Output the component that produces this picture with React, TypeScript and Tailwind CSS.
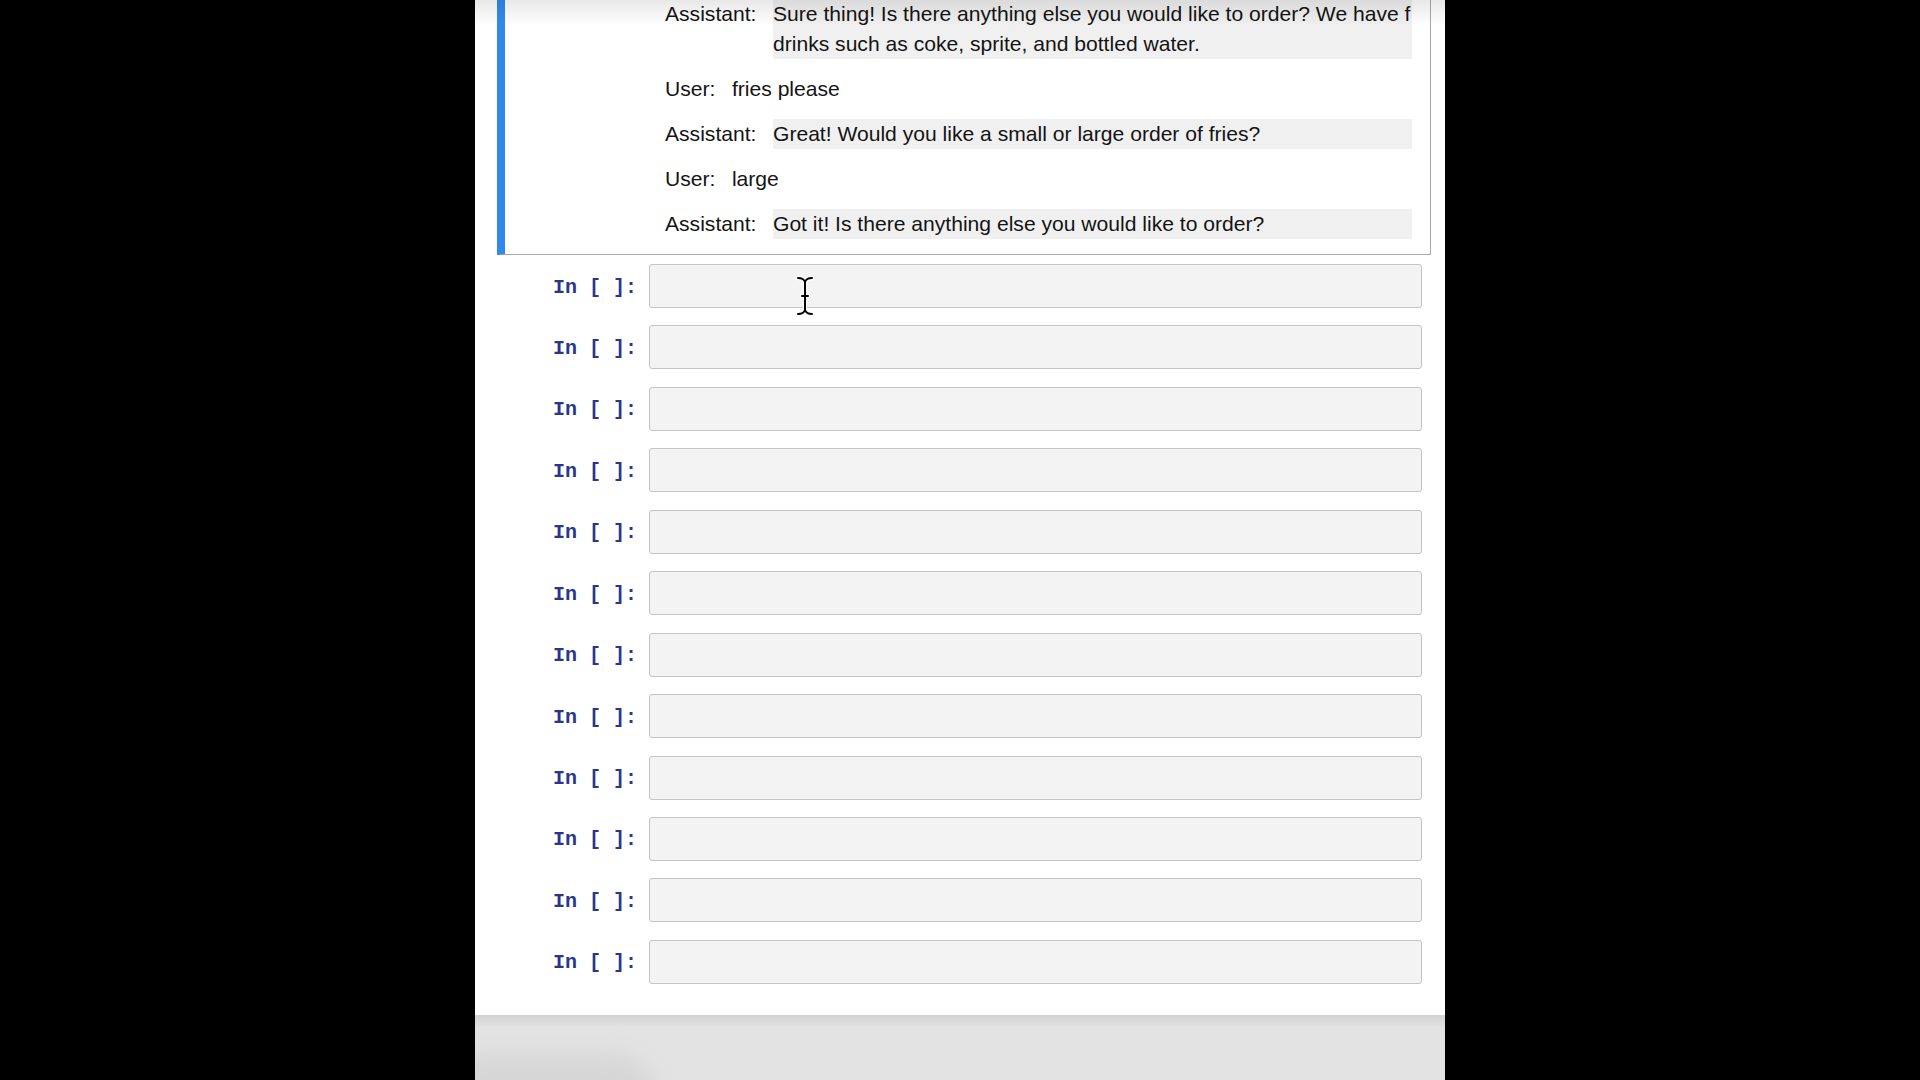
import React from 'react';

// Chat transcript rendered in the selected (output) cell
type Turn = { role: 'User' | 'Assistant'; lines: string[] };

const turns: Turn[] = [
  {
    role: 'Assistant',
    lines: [
      'Sure thing! Is there anything else you would like to order? We have f',
      'drinks such as coke, sprite, and bottled water.',
    ],
  },
  { role: 'User', lines: ['fries please'] },
  { role: 'Assistant', lines: ['Great! Would you like a small or large order of fries?'] },
  { role: 'User', lines: ['large'] },
  { role: 'Assistant', lines: ['Got it! Is there anything else you would like to order?'] },
];

const ChatRow: React.FC<{ turn: Turn }> = ({ turn }) => {
  const isAssistant = turn.role === 'Assistant';
  return (
    <div className="flex items-start gap-[16.5px]">
      <span className="whitespace-nowrap">{turn.role}:</span>
      {isAssistant ? (
        <div className="w-[639px] bg-[#f0f0f0]">
          {turn.lines.map((line, i) => (
            <div key={i} className="whitespace-nowrap">
              {line}
            </div>
          ))}
        </div>
      ) : (
        <span className="whitespace-nowrap">{turn.lines[0]}</span>
      )}
    </div>
  );
};

const InputCell: React.FC = () => (
  <div className="flex items-center">
    <div
      className="w-[152px] pr-[12px] pt-[3px] text-right text-[20px] leading-none font-bold text-[#29368c] whitespace-pre"
      style={{ fontFamily: '"Liberation Mono", "DejaVu Sans Mono", monospace' }}
    >
      {'In [ ]:'}
    </div>
    <div className="flex-1 mr-[9px] h-[44px] rounded-[3px] border border-[#c4c4c4] bg-[#f3f3f3]" />
  </div>
);

const IBeamCursor: React.FC = () => (
  <svg
    className="absolute left-[320px] top-[276px] pointer-events-none"
    width="20"
    height="40"
    viewBox="0 0 20 40"
  >
    <g fill="none" strokeLinecap="round" strokeLinejoin="round">
      <path
        d="M3 2 C7 2 9 3 10 6 C11 3 13 2 17 2 M10 6 L10 34 M3 38 C7 38 9 37 10 34 C11 37 13 38 17 38 M7 20 L13 20"
        stroke="#ffffff"
        strokeWidth="4.5"
      />
      <path
        d="M3 2 C7 2 9 3 10 6 C11 3 13 2 17 2 M10 6 L10 34 M3 38 C7 38 9 37 10 34 C11 37 13 38 17 38 M7 20 L13 20"
        stroke="#000000"
        strokeWidth="2"
      />
    </g>
  </svg>
);

export default function App() {
  return (
    <div className="w-full h-[1080px] bg-black flex justify-center overflow-hidden">
      <div className="relative w-[970px] h-[1080px] flex flex-col bg-white">
        <div className="pl-[22px] pr-[14px] pb-[31px]">
          {/* selected output cell */}
          <div
            className="border-l-[8px] border-l-[#3388ee] border-r border-b border-r-[#a9a9a9] border-b-[#a9a9a9] pb-[15px] text-[21.1px] leading-[30px] text-[#141414]"
            style={{ fontFamily: '"Liberation Sans", Arial, sans-serif' }}
          >
            <div className="mt-[-1px] pl-[160px] flex flex-col gap-[15px]">
              {turns.map((t, i) => (
                <ChatRow key={i} turn={t} />
              ))}
            </div>
          </div>

          {/* empty code cells */}
          <div className="mt-[9px] flex flex-col gap-[17.45px]">
            {Array.from({ length: 12 }).map((_, i) => (
              <InputCell key={i} />
            ))}
          </div>
        </div>

        {/* area below the notebook */}
        <div className="relative flex-1 bg-[#e3e3e3] overflow-hidden">
          <div className="h-[12px] bg-gradient-to-b from-[#d2d2d2] to-[#e3e3e3]" />
          <div className="absolute -left-[40px] top-[40px] w-[220px] h-[80px] rounded-full bg-[#d6d6d6] blur-[10px]" />
        </div>

        {/* header shadow at top */}
        <div className="absolute left-0 top-0 w-full h-[26px] pointer-events-none bg-gradient-to-b from-[rgba(0,0,0,0.09)] to-transparent" />

        <IBeamCursor />
      </div>
    </div>
  );
}
